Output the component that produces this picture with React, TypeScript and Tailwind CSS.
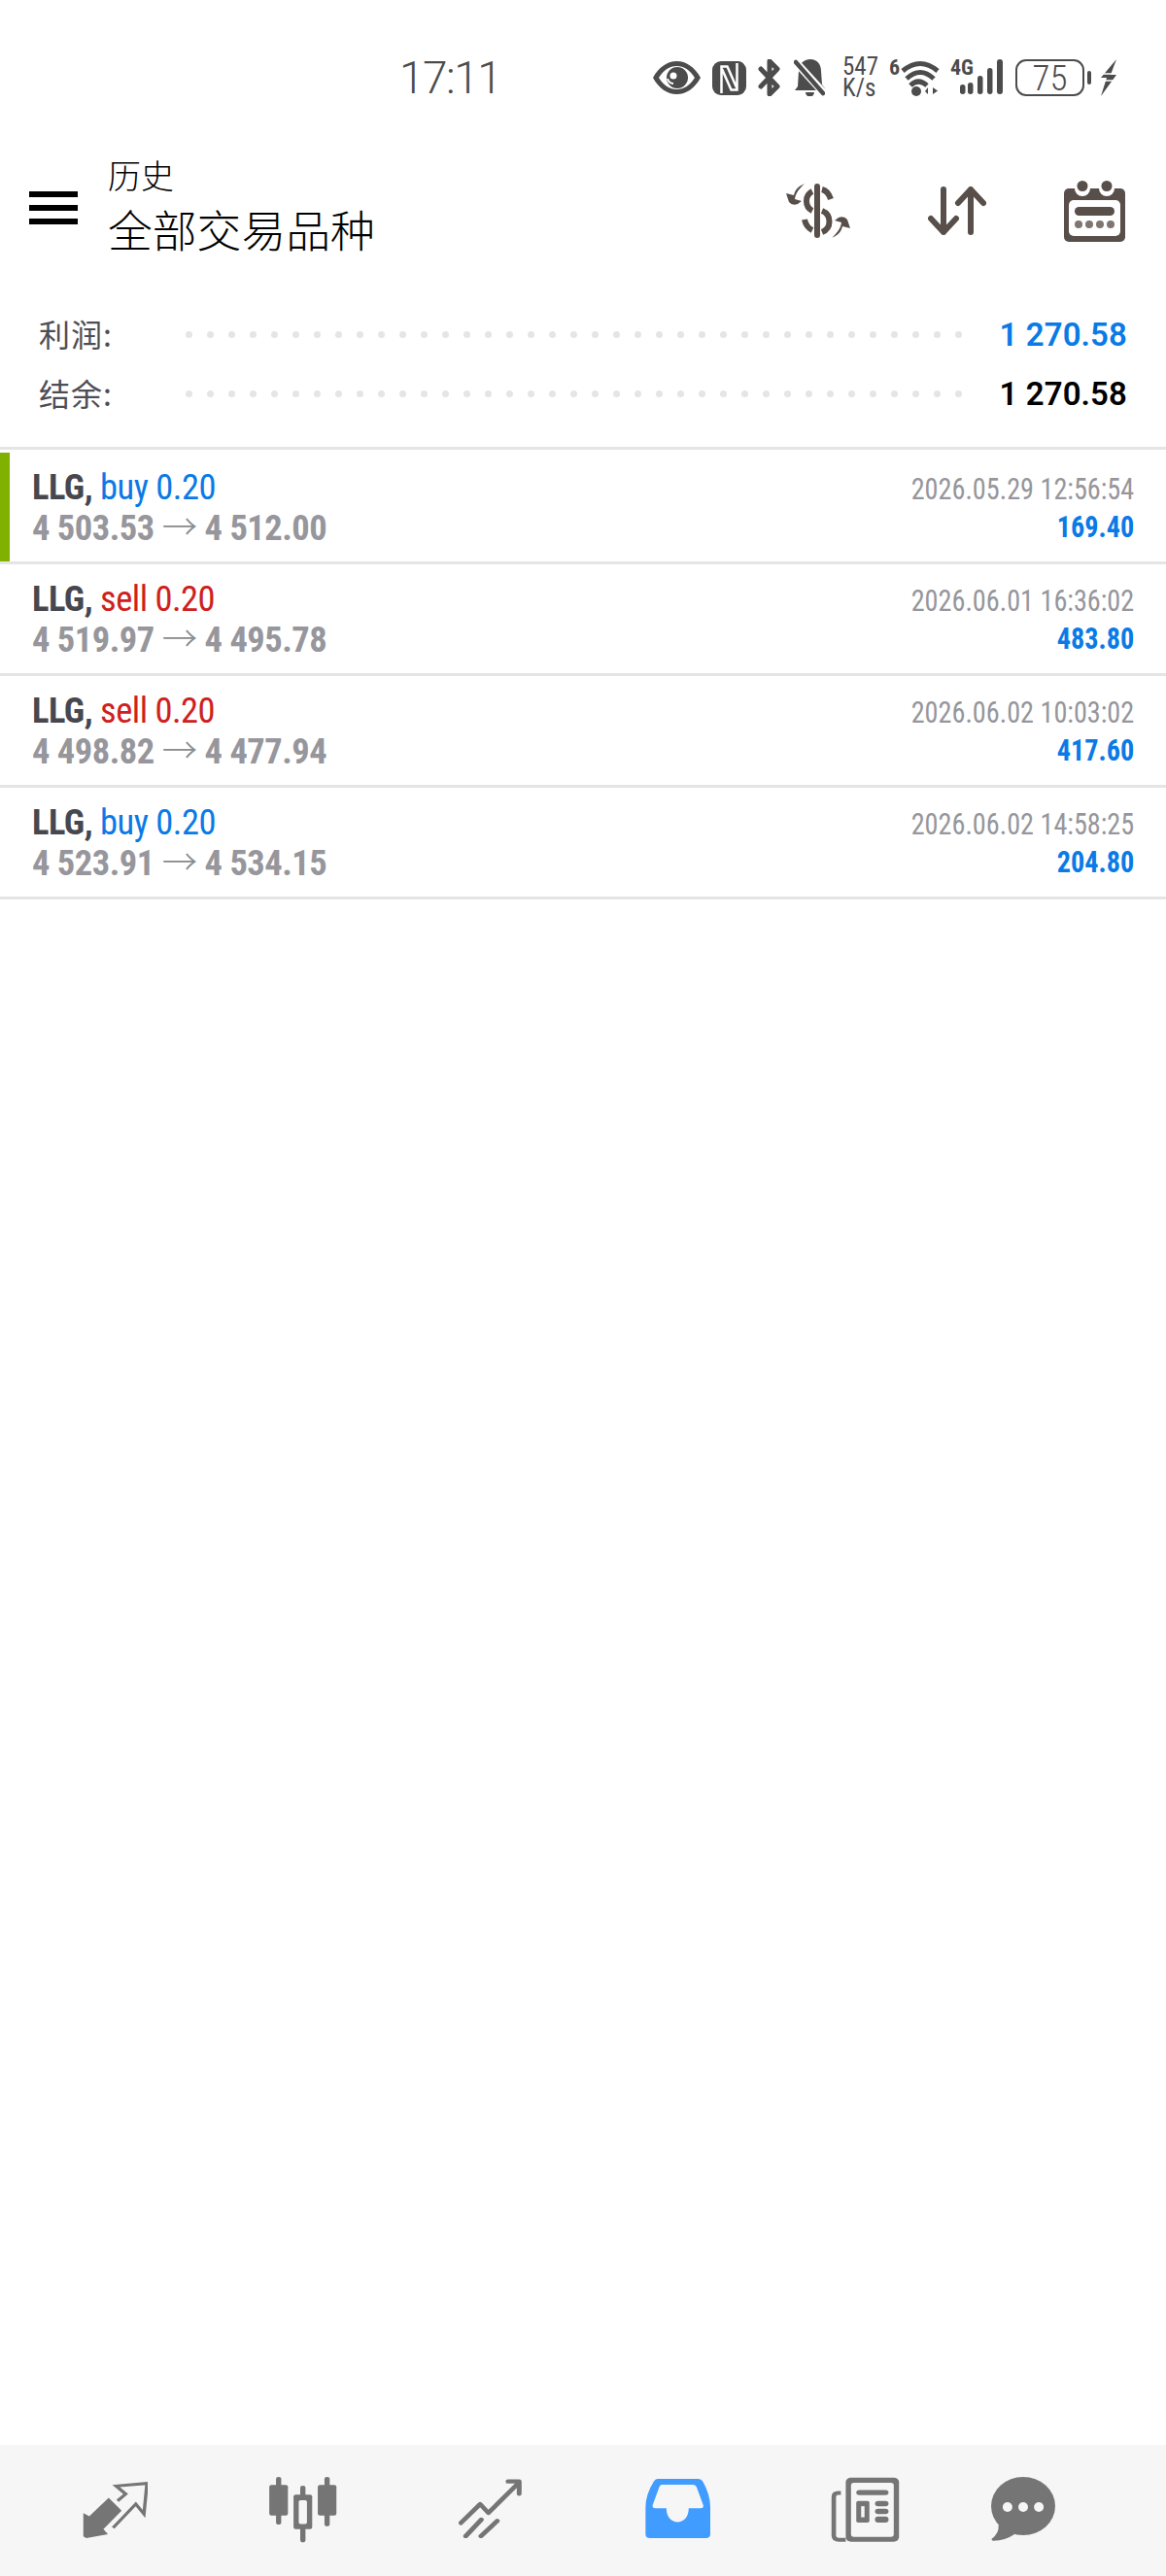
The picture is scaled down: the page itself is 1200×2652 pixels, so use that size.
const GRAY = '#757575';
const NAV_BG = '#f6f6f6';
const BROWN = '#584e4a';

const deals = [
    { side: 'buy', open: '4 503.53', close: '4 512.00', time: '2026.05.29 12:56:54', profit: '169.40', active: true },
    { side: 'sell', open: '4 519.97', close: '4 495.78', time: '2026.06.01 16:36:02', profit: '483.80', active: false },
    { side: 'sell', open: '4 498.82', close: '4 477.94', time: '2026.06.02 10:03:02', profit: '417.60', active: false },
    { side: 'buy', open: '4 523.91', close: '4 534.15', time: '2026.06.02 14:58:25', profit: '204.80', active: false },
];

function StatusBar() {
    return (
        <div className="h-[160px] flex items-center text-[#4c4c4c] font-['Roboto',sans-serif]">
            <span className="ml-[411px] w-[110px] text-[46px] leading-none font-light tracking-[-1.5px]">17:11</span>
            <svg className="ml-[151px]" width="49" height="34" viewBox="0 0 49 34" fill="currentColor">
                <path fillRule="evenodd" d="M0 17C6 6 15 0 24.5 0S43 6 49 17C43 28 34 34 24.5 34S6 28 0 17zm6 0c5 8 11 12 18.500 12S38 25 43 17C38 9 32 5 24.500 5S11 9 6 17z" />
                <circle cx="25" cy="17" r="11" />
                <path d="M15 18c1 3 3 5 6 5" fill="none" stroke="#fff" strokeWidth="2" />
                <circle cx="21" cy="15" r="3.5" fill="#fff" />
            </svg>
            <svg className="ml-[12px]" width="35" height="35" viewBox="0 0 35 35" fill="currentColor">
                <rect width="35" height="35" rx="9" />
                <path d="M9.500 33V5.500h6L25 27M25.500 2v27.500h-6L10 8" stroke="#fff" strokeWidth="2.500" fill="none" />
            </svg>
            <svg className="ml-[12px]" width="23" height="38" viewBox="0 0 23 38" fill="none" stroke="currentColor" strokeWidth="5" strokeLinecap="round" strokeLinejoin="round">
                <path d="M3 10l17 18-8 8V2l8 8L3 28" />
            </svg>
            <svg className="ml-[14px]" width="32" height="38" viewBox="0 0 32 38" fill="currentColor">
                <path d="M17 0c7 0 11 5 11 12l1 14 3 4v2H1l3-4 1-16C5 5 10 0 17 0z" />
                <path d="M12 34h9a4.500 4.500 0 0 1-9 0z" />
                <path d="M1 2l31 34" stroke="#fff" strokeWidth="8" />
                <path d="M2 3l28 32" stroke="currentColor" strokeWidth="4.500" strokeLinecap="round" />
            </svg>
            <div className="ml-[18px] w-[36px] text-[25px] leading-[22px] whitespace-nowrap [font-stretch:75%]">
                <div>547</div>
                <div>K/s</div>
            </div>
            <div className="ml-[12px] w-[12px] h-[40px] text-[22px] leading-[20px] font-bold [font-stretch:75%]">6</div>
            <svg width="40" height="40" viewBox="0 0 40 40" fill="currentColor">
                <path d="M2 13Q20-2 38 13M6 21Q20 8 34 21M10 28Q18 20 27 28" fill="none" stroke="currentColor" strokeWidth="5" />
                <circle cx="16" cy="34" r="5" />
                <path d="M25 34l3-4v7zM33 30v7l5-3.500z" />
            </svg>
            <div className="relative ml-[11px] w-[54px] h-[38px]">
                <span className="absolute left-0 top-0 text-[22px] leading-[17px] font-bold [font-stretch:75%]">4G</span>
                <svg className="absolute left-0 top-0" width="54" height="38" viewBox="0 0 54 38" fill="currentColor">
                    <rect x="10" y="26" width="5.500" height="10" rx="2.700" />
                    <rect x="18" y="24" width="5.500" height="12" rx="2.700" />
                    <rect x="28" y="17" width="5.500" height="19" rx="2.700" />
                    <rect x="38" y="9" width="5.500" height="27" rx="2.700" />
                    <rect x="48" y="0" width="6" height="36" rx="3" />
                </svg>
            </div>
            <div className="ml-[13px] w-[71px] h-[38px] rounded-[11px] border-[2.5px] border-[#4c4c4c] flex items-center justify-center text-[37px] font-light leading-none [font-stretch:75%]">75</div>
            <div className="ml-[3px] w-[4px] h-[14px] bg-[#4c4c4c] rounded-full" />
            <svg className="ml-[9px]" width="18" height="38" viewBox="0 0 18 38" fill="currentColor">
                <path d="M17 0L1 19h6L1 38l16-22h-6z" />
                <path d="M2 15h12M3 22h11" stroke="#fff" strokeWidth="1.500" />
            </svg>
        </div>
    );
}

function Header() {
    return (
        <div className="h-[112px] flex font-['Noto_Sans_CJK_SC',sans-serif]">
            <div className="ml-[30px] mt-[37px] w-[50px] h-[34px] flex flex-col justify-between">
                <div className="h-[6px] bg-black" />
                <div className="h-[6px] bg-black" />
                <div className="h-[6px] bg-black" />
            </div>
            <div className="ml-[31px] -mt-[1px] text-black font-light">
                <div className="text-[34px] leading-[42px]">历史</div>
                <div className="text-[45.8px] leading-[68px]">全部交易品种</div>
            </div>
            <div className="ml-auto mt-[25px] h-[64px] flex items-center" style={{ color: BROWN }}>
                <svg width="66" height="56" viewBox="0 0 66 56" fill="currentColor">
                    <rect x="29" width="6" height="56" rx="3" />
                    <path d="M27 8C19 12 19 24 27 28M37 6c4 1 7 4 9 10M37 28c10 4 10 18 0 22M19 37c1 5 4 9 8 11" fill="none" stroke="currentColor" strokeWidth="6" />
                    <path d="M19 0C12 3 9 7 8 12L0 10l3 9q3 4 9 2l4-3-7-2C10 9 14 5 19 0z" />
                    <path d="M19 0C12 3 9 7 8 12L0 10l3 9q3 4 9 2l4-3-7-2C10 9 14 5 19 0z" transform="rotate(180 33 28)" />
                </svg>
                <svg className="ml-[80px]" width="60" height="50" viewBox="0 0 60 50" fill="none" stroke="currentColor" strokeWidth="6" strokeLinecap="round" strokeLinejoin="round">
                    <path d="M16 3v44M3 33l13 14 13-14" />
                    <path d="M44 47V3M31 17L44 3l13 14" />
                </svg>
                <svg className="ml-[80px] mr-[42px]" width="63" height="63" viewBox="0 0 63 63" fill="currentColor">
                    <rect y="8" width="63" height="55" rx="5" />
                    <rect x="5" y="20" width="53" height="37" rx="5" fill="#fff" />
                    <circle cx="19" cy="8" r="8" fill="#fff" />
                    <circle cx="44" cy="8" r="8" fill="#fff" />
                    <circle cx="19" cy="5.500" r="5.500" />
                    <circle cx="44" cy="5.500" r="5.500" />
                    <rect x="11" y="27" width="41" height="9" rx="4.500" />
                    <g fill="#7f7672">
                        <circle cx="15" cy="45" r="4" />
                        <circle cx="26" cy="45" r="4" />
                        <circle cx="37" cy="45" r="4" />
                        <circle cx="48" cy="45" r="4" />
                    </g>
                </svg>
            </div>
        </div>
    );
}

function SummaryRow({ label, value, valueClass }: { label: string; value: string; valueClass: string }) {
    return (
        <div className="h-[61px] flex items-center">
            <span className="w-[151px] -mt-[3px] text-[32px] tracking-[1px] text-[#4d4d55] font-['Noto_Sans_CJK_SC',sans-serif]">{label}</span>
            <div className="flex gap-[15px]">
                {Array.from({ length: 37 }).map((_, i) => (
                    <span key={i} className="w-[7px] h-[7px] rounded-full bg-[#e5e5e5]" />
                ))}
            </div>
            <span className={`ml-auto mt-[1px] text-[33px] tracking-[0.1px] font-semibold font-['Roboto',sans-serif] ${valueClass}`}>{value}</span>
        </div>
    );
}

function DealRow({ deal }: { deal: (typeof deals)[number] }) {
    return (
        <div className="relative h-[115px] border-b-[3px] border-[#e5e5e5] px-[33px] pt-[18px] flex justify-between font-['Roboto',sans-serif] [font-stretch:75%]">
            {deal.active && <div className="absolute left-0 top-0 bottom-0 w-[9.5px] bg-[#80b000]" />}
            <div className="-mt-[2px] text-[36.5px] leading-[39px] tracking-[-0.5px] whitespace-nowrap">
                <div>
                    <span className="font-bold text-[#47474f]">LLG, </span>
                    <span className={deal.side === 'buy' ? 'text-[#0a7ae6]' : 'text-[#cf2020]'}>{deal.side} 0.20</span>
                </div>
                <div className="font-bold text-[#96969c]">
                    {deal.open}{' '}
                    <span className="inline-block font-['Noto_Sans_CJK_SC',sans-serif] font-light text-[#8c8c90] leading-[39px]">→</span>{' '}
                    {deal.close}
                </div>
            </div>
            <div className="text-right text-[31px] leading-[39px] whitespace-nowrap origin-right scale-x-[0.91]">
                <div className="text-[#96969c]">{deal.time}</div>
                <div className="font-bold text-[#0a7ae6]">{deal.profit}</div>
            </div>
        </div>
    );
}

function BottomNav() {
    return (
        <div className="h-[135px] flex pl-[22px] items-start" style={{ backgroundColor: NAV_BG }}>
            <div className="w-[193px] h-full flex justify-center">
                <svg className="mt-[38px]" width="67" height="58" viewBox="222 165 175 175" preserveAspectRatio="none" fill={GRAY}>
                    <path d="M292 215L327 255 278 312 290 328 232 340 224 335V262L240 272z" />
                    <path d="M316 224L338 203 312 178 395 170 387 265 365 234 304 308" fill="none" stroke={GRAY} strokeWidth="9" />
                </svg>
            </div>
            <div className="w-[193px] h-full flex justify-center">
                <svg className="mt-[33px]" width="71" height="68" viewBox="720 150 185 205" preserveAspectRatio="none" fill={GRAY}>
                    <rect x="723" y="175" width="50" height="95" rx="6" />
                    <rect x="741" y="150" width="14" height="148" rx="7" />
                    <rect x="853" y="175" width="50" height="95" rx="6" />
                    <rect x="871" y="150" width="14" height="153" rx="7" />
                    <rect x="806" y="177" width="14" height="176" rx="7" />
                    <rect x="788" y="205" width="50" height="107" rx="6" />
                    <rect x="802" y="222" width="22" height="74" rx="5" fill={NAV_BG} />
                </svg>
            </div>
            <div className="w-[193px] h-full flex justify-center">
                <svg className="mt-[35px]" width="65" height="61" viewBox="1232 157 170 183" preserveAspectRatio="none" fill="none" stroke={GRAY} strokeWidth="13" strokeLinecap="round" strokeLinejoin="round">
                    <path d="M1238 293L1290 235 1312 262 1393 170" />
                    <path d="M1365 165H1395V203" />
                    <path d="M1251 334L1293 283" />
                    <path d="M1292 334L1336 287" />
                </svg>
            </div>
            <div className="w-[193px] h-full flex justify-center">
                <svg className="mt-[35px]" width="67" height="61" viewBox="167 157 175 183" preserveAspectRatio="none" fill="#409cff">
                    <path d="M200 157H310Q318 157 322 165 342 205 342 245V328Q342 340 330 340H180Q168 340 168 328V245Q168 205 190 165 194 157 200 157z" />
                    <path fill={NAV_BG} d="M212 175H295Q302 175 305 182L323 238Q325 248 316 248H284C284 305 224 305 224 248H195Q185 248 187 238L205 182Q207 175 212 175z" />
                </svg>
            </div>
            <div className="w-[193px] h-full flex justify-center">
                <svg className="mt-[33px]" width="71" height="67" viewBox="668 148 184 200" preserveAspectRatio="none" fill={GRAY}>
                    <rect x="708" y="150" width="142" height="197" rx="14" />
                    <rect x="722" y="166" width="114" height="166" rx="8" fill={NAV_BG} />
                    <path d="M695 197H688Q676 197 676 210V328Q676 341 690 341H708" fill="none" stroke={GRAY} strokeWidth="12" />
                    <rect x="736" y="188" width="86" height="16" rx="8" />
                    <rect x="736" y="222" width="35" height="66" rx="5" />
                    <rect x="749" y="238" width="9" height="34" fill={NAV_BG} />
                    <rect x="786" y="222" width="36" height="16" rx="8" />
                    <rect x="786" y="246" width="36" height="16" rx="8" />
                    <rect x="786" y="270" width="36" height="18" rx="8" />
                </svg>
            </div>
            <div className="w-[132px] h-full flex justify-center">
                <svg className="mt-[33px]" width="66" height="66" viewBox="1098 150 172 198" preserveAspectRatio="none" fill={GRAY}>
                    <ellipse cx="1184" cy="240" rx="86" ry="90" />
                    <path d="M1118 298Q1120 325 1099 342 1100 348 1105 347 1135 347 1162 326z" />
                    <ellipse cx="1142" cy="243" rx="13" ry="15" fill={NAV_BG} />
                    <ellipse cx="1184" cy="243" rx="13" ry="15" fill={NAV_BG} />
                    <ellipse cx="1226" cy="243" rx="13" ry="15" fill={NAV_BG} />
                </svg>
            </div>
        </div>
    );
}

export default function App() {
    return (
        <div className="w-[1200px] h-[2652px] bg-white flex flex-col overflow-hidden">
            <StatusBar />
            <Header />
            <div className="px-[40px] pt-[42px] pb-[24px] border-b-[3px] border-[#e5e5e5]">
                <SummaryRow label="利润:" value="1 270.58" valueClass="text-[#0a7ae6]" />
                <SummaryRow label="结余:" value="1 270.58" valueClass="text-black" />
            </div>
            <div className="pt-[3px]">
                {deals.map((deal) => (
                    <DealRow key={deal.time} deal={deal} />
                ))}
            </div>
            <div className="flex-1" />
            <BottomNav />
        </div>
    );
}
